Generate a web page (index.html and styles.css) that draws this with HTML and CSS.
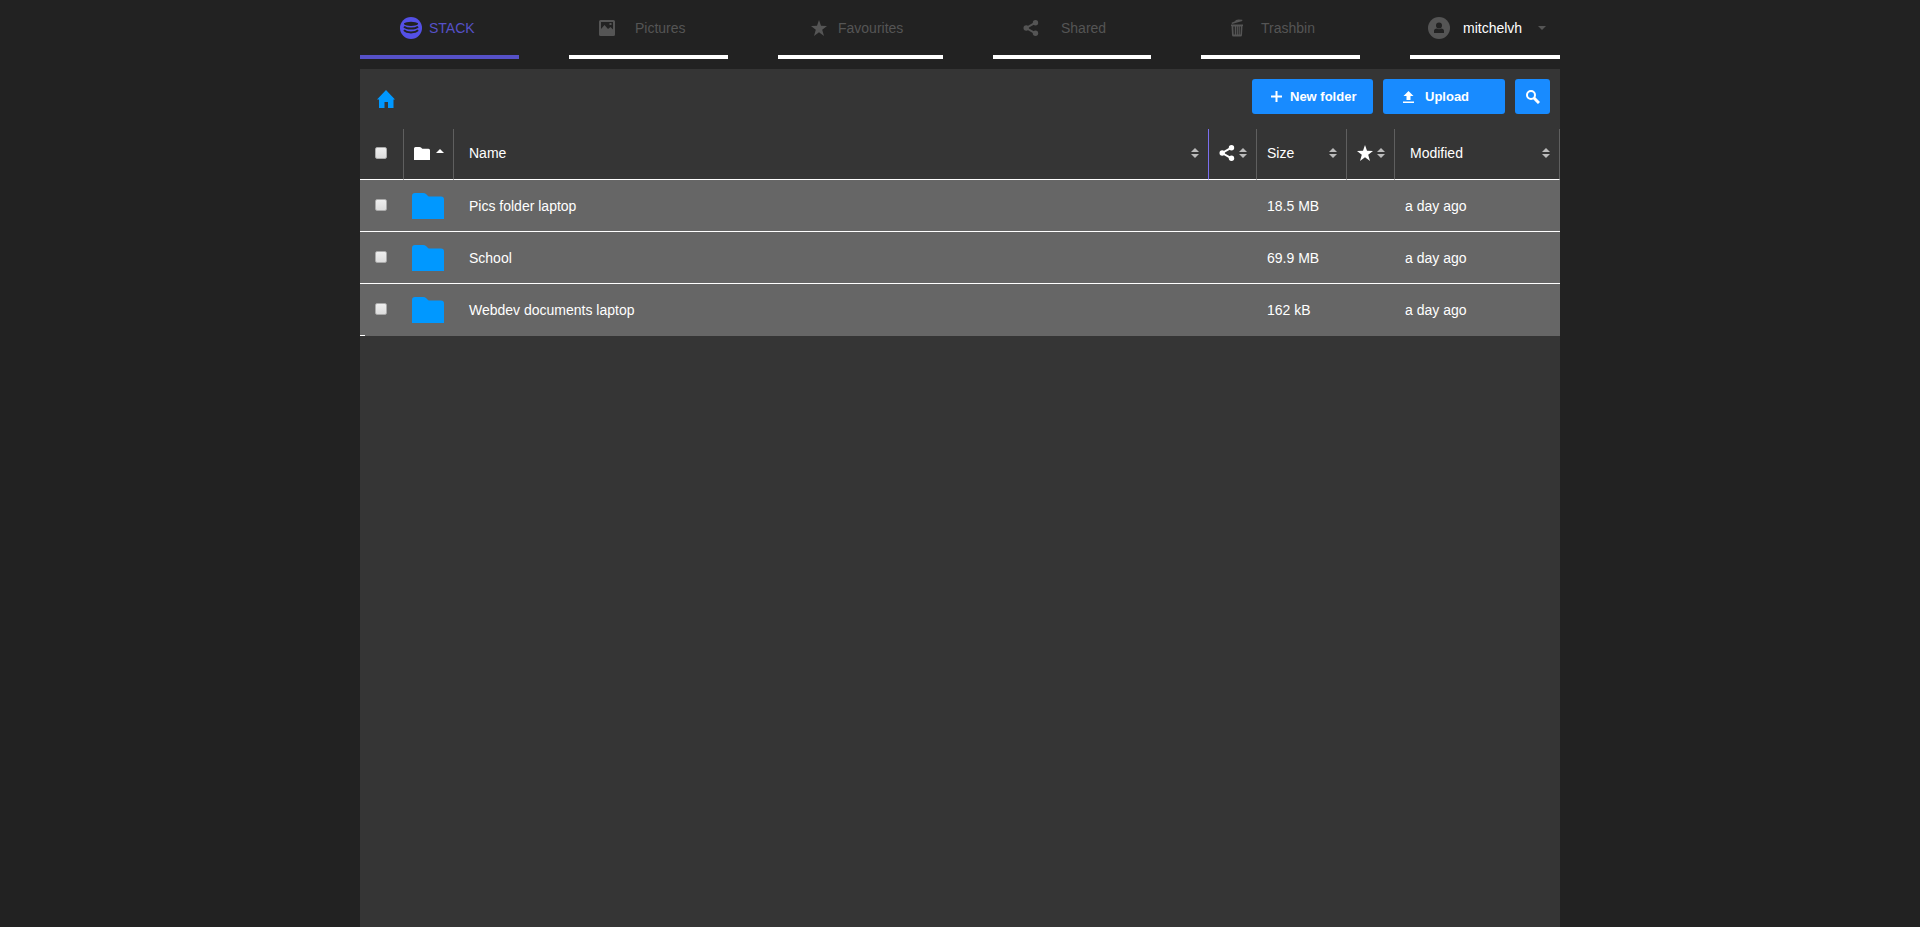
FILE: index.html
```html
<!DOCTYPE html>
<html lang="en">
<head>
    <meta charset="UTF-8">
    <meta name="viewport" content="width=device-width, initial-scale=1.0">
    <title>STACK</title>
    <link rel="stylesheet" href="styles.css">
</head>
<body>
    <!-- shared icons -->
    <svg class="sprite" aria-hidden="true">
        <symbol id="i-folder" viewBox="0 0 32 26">
            <path d="M0 26V3Q0 0 3 0H11Q13 0 14 1L16 3Q16.500 3.500 18 3.500H29Q32 3.500 32 6.500V26Z"/>
        </symbol>
        <symbol id="i-star" viewBox="0 0 16 16">
            <path d="M8 0L10 5.700L16 5.900L11.200 9.700L13 16L8 12.200L3 16L4.800 9.700L0 5.900L6 5.700Z"/>
        </symbol>
        <symbol id="i-share" viewBox="0 0 15 16">
            <circle cx="12" cy="2.700" r="2.700"/>
            <circle cx="2.700" cy="8" r="2.700"/>
            <circle cx="12" cy="13.300" r="2.700"/>
            <path d="M12 2.700L2.700 8L12 13.300" fill="none" stroke="currentColor" stroke-width="2"/>
        </symbol>
        <symbol id="i-sort" viewBox="0 0 8 10">
            <path d="M4 0L8 4H0ZM0 6H8L4 10Z"/>
        </symbol>
    </svg>

    <div class="container">
        <nav class="nav">
            <a href="#" class="nav-item active">
                <svg class="icon-round" viewBox="0 0 22 22">
                    <circle cx="11" cy="11" r="11"/>
                    <path class="cut" d="M4 6.300Q6 4.700 11 4.700T18 6.300V7.200Q16 8.900 11 8.900T4 7.200Z"/>
                    <path class="cut-line" d="M4 9.600Q6 11.600 11 11.600T18 9.600M4 13.200Q6 15.400 11 15.400T18 13.200"/>
                </svg>
                <span>STACK</span>
            </a>
            <a href="#" class="nav-item pictures">
                <svg class="icon" viewBox="0 0 16 16">
                    <path fill-rule="evenodd" d="M1.500 0H14.500Q16 0 16 1.500V14.500Q16 16 14.500 16H1.500Q0 16 0 14.500V1.500Q0 0 1.500 0ZM2 2V9L5.500 5L9 9L11.500 7L14 9.500V2ZM10.500 3H12.500V5H10.500Z"/>
                </svg>
                <span>Pictures</span>
            </a>
            <a href="#" class="nav-item favourites">
                <svg class="icon"><use href="#i-star"/></svg>
                <span>Favourites</span>
            </a>
            <a href="#" class="nav-item shared">
                <svg class="icon"><use href="#i-share"/></svg>
                <span>Shared</span>
            </a>
            <a href="#" class="nav-item trashbin">
                <svg class="icon-trash" viewBox="0 0 12 18">
                    <path d="M0.500 3.700L4 2.300L5 1L7.500 0.500L11.300 0.800V2L1 5Z"/>
                    <path fill-rule="evenodd" d="M0 5.500H12V7H11.500L11 16Q11 17.500 9.500 17.500H2.500Q1 17.500 1 16L0.500 7H0ZM2.300 7.500L2.700 15.500H3.800V7.500ZM5 7.500V15.500H5.700V7.500ZM6.900 7.500V15.500H7.600V7.500ZM8.800 7.500V15.500H9.500L9.900 7.500Z"/>
                </svg>
                <span>Trashbin</span>
            </a>
            <a href="#" class="nav-item user">
                <svg class="icon-round" viewBox="0 0 22 22">
                    <circle cx="11" cy="11" r="11"/>
                    <g class="cut">
                        <circle cx="11" cy="8.500" r="3"/>
                        <path d="M6 16V14Q6 11.500 9 11.500Q11 13 13 11.500Q16 11.500 16 14V16Z"/>
                    </g>
                </svg>
                <span>mitchelvh</span>
                <svg class="caret" viewBox="0 0 8 4"><path d="M0 0H8L4 4Z"/></svg>
            </a>
        </nav>

        <main class="panel">
            <div class="toolbar">
                <a href="#" class="home" aria-label="Home">
                    <svg viewBox="0 0 18 18"><path d="M9 0L18 9.500H16.500V18H11V12H7.500V18H2V9.500H0Z"/></svg>
                </a>
                <button class="btn new-folder">
                    <svg class="icon-plus" viewBox="0 0 11 11"><path d="M4.500 0H6.500V4.500H11V6.500H6.500V11H4.500V6.500H0V4.500H4.500Z"/></svg>
                    New folder
                </button>
                <button class="btn upload">
                    <svg class="icon-upload" viewBox="0 0 11 12"><path d="M5.500 0L10.500 5H7.500V9H3.500V5H0.500ZM0 10.500H11V12H0Z"/></svg>
                    Upload
                </button>
                <button class="btn search" aria-label="Search">
                    <svg class="icon-search" viewBox="0 0 14 14"><circle cx="5" cy="5" r="4"/><path d="M8 8L13 13"/></svg>
                </button>
            </div>

            <table class="files">
                <thead>
                    <tr>
                        <th class="col-check"><input type="checkbox" aria-label="Select all"></th>
                        <th class="col-type"><div class="head"><svg class="folder-small"><use href="#i-folder"/></svg><svg class="sort-up" viewBox="0 0 8 4"><path d="M4 0L8 4H0Z"/></svg></div></th>
                        <th class="col-name"><div class="head">Name<svg class="sort"><use href="#i-sort"/></svg></div></th>
                        <th class="col-share"><div class="head"><svg class="icon"><use href="#i-share"/></svg><svg class="sort"><use href="#i-sort"/></svg></div></th>
                        <th class="col-size"><div class="head">Size<svg class="sort"><use href="#i-sort"/></svg></div></th>
                        <th class="col-fav"><div class="head"><svg class="icon"><use href="#i-star"/></svg><svg class="sort"><use href="#i-sort"/></svg></div></th>
                        <th class="col-modified"><div class="head">Modified<svg class="sort"><use href="#i-sort"/></svg></div></th>
                    </tr>
                </thead>
                <tbody>
                    <tr>
                        <td class="col-check"><input type="checkbox" aria-label="Pics folder laptop"></td>
                        <td class="col-type"><svg class="folder"><use href="#i-folder"/></svg></td>
                        <td class="col-name">Pics folder laptop</td>
                        <td></td>
                        <td class="col-size">18.5 MB</td>
                        <td></td>
                        <td class="col-modified">a day ago</td>
                    </tr>
                    <tr>
                        <td class="col-check"><input type="checkbox" aria-label="School"></td>
                        <td class="col-type"><svg class="folder"><use href="#i-folder"/></svg></td>
                        <td class="col-name">School</td>
                        <td></td>
                        <td class="col-size">69.9 MB</td>
                        <td></td>
                        <td class="col-modified">a day ago</td>
                    </tr>
                    <tr>
                        <td class="col-check"><input type="checkbox" aria-label="Webdev documents laptop"></td>
                        <td class="col-type"><svg class="folder"><use href="#i-folder"/></svg></td>
                        <td class="col-name">Webdev documents laptop</td>
                        <td></td>
                        <td class="col-size">162 kB</td>
                        <td></td>
                        <td class="col-modified">a day ago</td>
                    </tr>
                </tbody>
            </table>
        </main>
    </div>
</body>
</html>
```
FILE: styles.css
```css
* {
    box-sizing: border-box;
}
body {
    margin: 0;
    background: #222;
    color: white;
    font-family: "Liberation Sans", Arial, sans-serif;
    font-size: 14px;
    line-height: 20px;
}
svg {
    display: block;
    flex: none;
    fill: currentColor;
}
.sprite {
    position: absolute;
    width: 0;
    height: 0;
}
.container {
    display: flex;
    flex-direction: column;
    max-width: 1200px;
    min-height: 100vh;
    margin: 0 auto;
}

/* top navigation */
.nav {
    display: grid;
    grid-template-columns: 159fr 159fr 165fr 158fr 159fr 150fr;
    gap: 50px;
    margin-bottom: 10px;
}
.nav-item {
    display: flex;
    align-items: center;
    height: 59px;
    padding: 0 0 0 30px;
    border-bottom: 4px solid white;
    color: #555;
    text-decoration: none;
}
.nav-item.active {
    gap: 7px;
    padding-left: 40px;
    border-color: #5651c8;
    color: #5651c8;
}
.nav-item.active .icon-round {
    color: #5450e6;
}
.pictures {
    gap: 20px;
}
.favourites {
    gap: 11px;
    padding-left: 33px;
}
.shared {
    gap: 22px;
}
.trashbin {
    gap: 18px;
}
.user {
    gap: 13px;
    padding-left: 18px;
}
.user span {
    color: white;
}
.icon {
    width: 16px;
    height: 16px;
}
.icon-round {
    width: 22px;
    height: 22px;
}
.icon-trash {
    width: 12px;
    height: 18px;
}
.cut {
    fill: #222;
}
.cut-line {
    fill: none;
    stroke: #222;
    stroke-width: 2;
}
.caret {
    width: 8px;
    height: 4px;
    margin-left: auto;
    margin-right: 14px;
}

/* file panel */
.panel {
    flex: 1;
    background: #353535;
}
.toolbar {
    display: flex;
    gap: 10px;
    padding: 10px 10px 15px;
}
.home {
    margin: 11px auto 0 7px;
    color: #0098ff;
}
.home svg {
    width: 18px;
    height: 18px;
}
.btn {
    display: flex;
    align-items: center;
    height: 35px;
    padding: 0 14px 0 19px;
    border: none;
    border-radius: 3px;
    background: #188bff;
    color: white;
    font: bold 13px "Liberation Sans", Arial, sans-serif;
    cursor: pointer;
}
.new-folder {
    gap: 8px;
    min-width: 121px;
}
.upload {
    gap: 11px;
    min-width: 122px;
    padding-left: 20px;
}
.search {
    justify-content: center;
    width: 35px;
    padding: 0;
}
.icon-plus {
    width: 11px;
    height: 11px;
}
.icon-upload {
    width: 11px;
    height: 12px;
}
.icon-search {
    width: 14px;
    height: 14px;
    fill: none;
    stroke: currentColor;
    stroke-width: 2;
}
.icon-search path {
    stroke-width: 3;
}

/* file list */
.files {
    width: 100%;
    table-layout: fixed;
    border-spacing: 0;
}
.files th {
    height: 51px;
    padding: 0 9px 2px 10px;
    border-right: 1px solid #5f5f5f;
    border-bottom: 1px solid white;
    font-weight: normal;
    text-align: left;
}
.files td {
    height: 52px;
    padding: 0 10px;
    border-bottom: 1px solid white;
    background: #666;
}
.files tbody tr:last-child td {
    border-bottom: none;
}
.files tbody tr:last-child .col-check {
    background: linear-gradient(white, white) left bottom / 5px 1px no-repeat #666;
}
.files th.col-check,
.files td.col-check {
    width: 44px;
    padding: 0 0 2px 15px;
}
.files th.col-type {
    width: 50px;
}
.files td.col-type {
    padding: 0 8px;
}
.files .col-name {
    padding-left: 15px;
}
.files th.col-name {
    border-right-color: #7b6ff0;
}
.files .col-share,
.files .col-fav {
    width: 48px;
}
.files .col-size {
    width: 90px;
}
.files .col-modified {
    width: 165px;
}
.files th.col-modified {
    padding-left: 15px;
}
.head {
    display: flex;
    align-items: center;
    justify-content: space-between;
}
.sort {
    width: 8px;
    height: 10px;
    color: #bbb;
}
.folder {
    width: 32px;
    height: 26px;
    color: #0098ff;
}
.folder-small {
    width: 16px;
    height: 13px;
}
.sort-up {
    width: 8px;
    height: 4px;
    margin-bottom: 4px;
}
input[type="checkbox"] {
    display: block;
    appearance: none;
    width: 12px;
    height: 12px;
    margin: 0;
    border: 1px solid #aaa;
    border-radius: 2px;
    background: linear-gradient(#eee, #ddd);
}
```
